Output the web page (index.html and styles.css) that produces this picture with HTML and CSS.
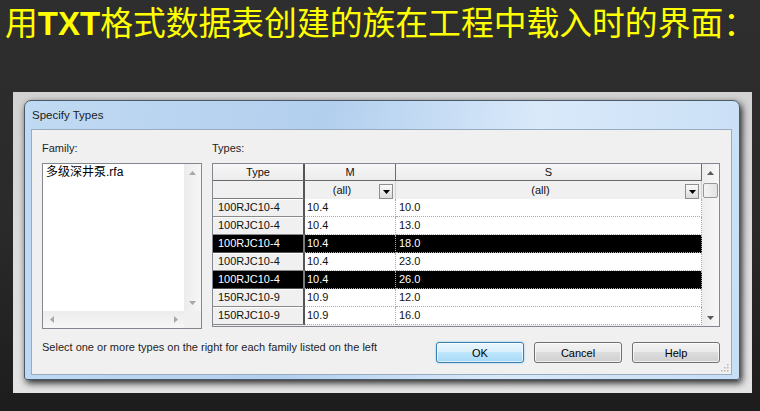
FILE: index.html
```html
<!DOCTYPE html>
<html lang="zh">
<head>
<meta charset="utf-8">
<title>Specify Types</title>
<link rel="stylesheet" href="styles.css">
</head>
<body>
<div class="slide">
  <h1 class="title">用<span class="latin">TXT</span>格式数据表创建的族在工程中载入时的界面：</h1>
  <div class="frame">
    <div class="dialog">
      <div class="titlebar">Specify Types</div>
      <div class="content">
        <div class="panels">
          <div class="family">
            <div class="label">Family:</div>
            <div class="listbox">
              <div class="items"><div class="item">多级深井泵.rfa</div></div>
              <div class="vscroll">
                <span class="sbtn"><svg width="7" height="4" viewBox="0 0 7 4"><path d="M0 4H7L3.5 0Z"/></svg></span>
                <span class="sbtn"><svg width="7" height="4" viewBox="0 0 7 4"><path d="M0 0H7L3.5 4Z"/></svg></span>
              </div>
              <div class="hscroll">
                <span class="sbtn"><svg width="4" height="7" viewBox="0 0 4 7"><path d="M4 0V7L0 3.5Z"/></svg></span>
                <span class="sbtn"><svg width="4" height="7" viewBox="0 0 4 7"><path d="M0 0V7L4 3.5Z"/></svg></span>
              </div>
              <div class="corner"></div>
            </div>
          </div>
          <div class="types">
            <div class="label">Types:</div>
            <div class="gridbox">
              <div class="grid">
                <div class="hc tcol">Type</div>
                <div class="hc">M</div>
                <div class="hc">S</div>

                <div class="fc tcol"></div>
                <div class="fc mcol"><span class="ftext">(all)</span><span class="dd"><svg width="7" height="4" viewBox="0 0 7 4"><path d="M0 0H7L3.5 4Z"/></svg></span></div>
                <div class="fc"><span class="ftext">(all)</span><span class="dd"><svg width="7" height="4" viewBox="0 0 7 4"><path d="M0 0H7L3.5 4Z"/></svg></span></div>

                <div class="tc">100RJC10-4</div><div class="dc m">10.4</div><div class="dc s">10.0</div>
                <div class="tc">100RJC10-4</div><div class="dc m">10.4</div><div class="dc s">13.0</div>
                <div class="tc sel">100RJC10-4</div><div class="dc m sel">10.4</div><div class="dc s sel">18.0</div>
                <div class="tc">100RJC10-4</div><div class="dc m">10.4</div><div class="dc s">23.0</div>
                <div class="tc sel">100RJC10-4</div><div class="dc m sel">10.4</div><div class="dc s sel">26.0</div>
                <div class="tc">150RJC10-9</div><div class="dc m">10.9</div><div class="dc s">12.0</div>
                <div class="tc">150RJC10-9</div><div class="dc m">10.9</div><div class="dc s">16.0</div>
              </div>
              <div class="gscroll">
                <span class="sbtn dark"><svg width="7" height="4" viewBox="0 0 7 4"><path d="M0 4H7L3.5 0Z"/></svg></span>
                <span class="thumb"></span>
                <span class="spacer"></span>
                <span class="sbtn dark"><svg width="7" height="4" viewBox="0 0 7 4"><path d="M0 0H7L3.5 4Z"/></svg></span>
              </div>
            </div>
          </div>
        </div>
        <div class="footer">
          <div class="hint">Select one or more types on the right for each family listed on the left</div>
          <div class="buttons">
            <button class="btn default">OK</button>
            <button class="btn">Cancel</button>
            <button class="btn">Help</button>
          </div>
        </div>
        <svg class="grip" width="10" height="10" viewBox="0 0 10 10">
          <g fill="#b5b5b5">
            <rect x="8" y="2" width="1.5" height="1.5"/>
            <rect x="5" y="5" width="1.5" height="1.5"/><rect x="8" y="5" width="1.5" height="1.5"/>
            <rect x="2" y="8" width="1.5" height="1.5"/><rect x="5" y="8" width="1.5" height="1.5"/><rect x="8" y="8" width="1.5" height="1.5"/>
          </g>
        </svg>
      </div>
    </div>
  </div>
</div>
</body>
</html>
```

FILE: styles.css
```css
* { box-sizing: border-box; }
html, body { margin: 0; padding: 0; }
body {
  width: 760px;
  height: 411px;
  overflow: hidden;
  background: linear-gradient(180deg, #2e2e2e 0%, #2a2a2a 55%, #1d1d1d 100%);
  font-family: "Liberation Sans", Arial, sans-serif;
}
.slide { display: flex; flex-direction: column; height: 100%; }

.title {
  margin: 0;
  height: 46px;
  padding: 2px 0 0 5px;
  font-family: "Liberation Sans", "Noto Sans CJK SC", sans-serif;
  font-weight: 400;
  font-size: 32.8px;
  line-height: 44px;
  color: #ffff00;
  white-space: nowrap;
}
.title .latin {
  font-weight: 700;
  font-size: 33px;
}

.frame {
  margin: 46px 0 0 13px;
  width: 739px;
  height: 301px;
  padding: 8px 12px 13px 11px;
  background: linear-gradient(180deg, #d2d2d2 0%, #e4e4e4 100%);
}
.dialog {
  height: 100%;
  display: flex;
  flex-direction: column;
  border: 1px solid #4c5967;
  border-radius: 7px 7px 3px 3px;
  background: linear-gradient(100deg, #c1daf3 0%, #b2cfee 40%, #d9e9fa 68%, #c7def5 100%);
  padding: 0 7px 4px 6px;
  box-shadow: 2px 3px 7px rgba(0, 0, 0, 0.85);
}
.titlebar {
  height: 28px;
  display: flex;
  align-items: center;
  padding-left: 1px;
  font-size: 11.5px;
  color: #1b1b1b;
}
.content {
  flex: 1;
  position: relative;
  display: flex;
  flex-direction: column;
  background: #f0f0f0;
  border: 1px solid #98abc1;
  padding: 11px 11px 0 10px;
  font-size: 11px;
  color: #000;
}
.panels { display: flex; gap: 10px; align-items: flex-start; }
.label { height: 14px; line-height: 14px; margin-bottom: 8px; color: #1e1e1e; }
.family { width: 160px; }
.types { width: 508px; }

.listbox {
  height: 166px;
  display: grid;
  grid-template-columns: 1fr 17px;
  grid-template-rows: 1fr 17px;
  background: #fff;
  border: 1px solid #828790;
}
.item {
  padding: 0 3px;
  line-height: 16px;
  font-family: "Liberation Sans", "Noto Sans CJK SC", sans-serif;
  font-size: 12px;
  color: #000;
}
.vscroll, .hscroll, .gscroll {
  display: flex;
  justify-content: space-between;
  background: linear-gradient(90deg, #ececec, #f6f6f6);
  color: #a8a8a8;
}
.vscroll, .gscroll { flex-direction: column; }
.hscroll { background: linear-gradient(180deg, #ececec, #f6f6f6); }
.corner { background: #f0f0f0; }
.sbtn {
  width: 17px;
  height: 17px;
  display: flex;
  align-items: center;
  justify-content: center;
  flex: none;
}
.sbtn svg { fill: currentColor; display: block; }
.sbtn.dark { color: #5a5a5a; }

.gridbox {
  height: 164px;
  display: flex;
  border: 1px solid #828790;
  background: #f0f0f0;
}
.grid {
  width: 489px;
  display: grid;
  grid-template-columns: 92px 91px 306px;
  grid-template-rows: 17px 18px repeat(7, 18px);
  align-content: start;
  font-size: 11px;
}
.hc {
  text-align: center;
  line-height: 16px;
  background: linear-gradient(180deg, #f7f7f7, #ececec);
  border-right: 1px solid #6a6a6a;
  border-bottom: 1px solid #6a6a6a;
  color: #111;
}
.tcol, .tc { border-right: 2px solid #555 !important; }
.fc {
  display: flex;
  align-items: flex-end;
  background: #f0f0f0;
  padding: 0 2px 0 0;
  border-right: 1px solid #d4d4d4;
}
.fc.tcol { border-bottom: 1px solid #7c7c7c; }
.ftext { flex: 1; text-align: center; line-height: 17px; color: #111; }
.dd {
  width: 14px;
  height: 15px;
  display: flex;
  align-items: center;
  justify-content: center;
  border: 1px solid #8e8e8e;
  background: linear-gradient(180deg, #fafafa, #dcdcdc);
}
.dd svg { fill: #000; display: block; }

.tc {
  padding-left: 5px;
  line-height: 17px;
  background: #f0f0f0;
  border-bottom: 1px solid #8a8a8a;
  box-shadow: inset 0 1px 0 #fff;
  color: #111;
}
.dc {
  line-height: 17px;
  background: #fff;
  border-bottom: 1px dotted #a9a9a9;
  border-right: 1px dotted #a9a9a9;
  color: #111;
}
.dc.m { padding-left: 2px; }
.dc.s { padding-left: 3px; }
.sel { background: #000; color: #fff; box-shadow: none; }
.tc.sel { border-right-color: #7a7a7a !important; border-bottom-color: #555; }

.gscroll { width: 17px; background: linear-gradient(90deg, #ededed, #f7f7f7); }
.thumb {
  width: 15px;
  height: 15px;
  margin: 2px 0 0 1px;
  border: 1px solid #979797;
  border-radius: 2px;
  background: linear-gradient(90deg, #f4f4f4, #e2e2e2);
}
.spacer { flex: 1; }

.footer {
  margin-top: 11px;
  display: flex;
  justify-content: space-between;
  align-items: flex-start;
}
.hint { line-height: 14px; color: #1e1e1e; }
.buttons { display: flex; gap: 10px; margin-top: 2px; }
.btn {
  width: 88px;
  height: 21px;
  padding: 0;
  border: 1px solid #707070;
  border-radius: 3px;
  font-family: "Liberation Sans", Arial, sans-serif;
  font-size: 11px;
  color: #000;
  background: linear-gradient(180deg, #f3f3f3 0%, #ebebeb 45%, #dddddd 50%, #cfcfcf 100%);
  box-shadow: inset 0 0 0 1px rgba(255, 255, 255, 0.7);
}
.btn.default {
  border-color: #3c7fb1;
  background: linear-gradient(180deg, #eaf6fd 0%, #d9f0fc 45%, #bee6fd 50%, #a7d9f5 100%);
  box-shadow: inset 0 0 0 1px rgba(255, 255, 255, 0.6), 0 0 2px #6ec2f0;
}
.grip { position: absolute; right: 2px; bottom: 2px; }
```
